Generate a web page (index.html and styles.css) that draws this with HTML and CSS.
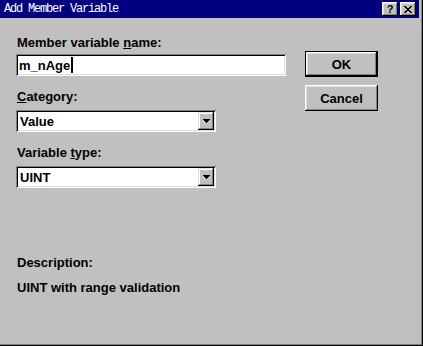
FILE: index.html
```html
<!DOCTYPE html>
<html lang="en">
<head>
  <meta charset="UTF-8">
  <title>Add Member Variable</title>
  <link rel="stylesheet" href="styles.css">
</head>
<body>
  <div class="window">
    <!-- Caption -->
    <div class="titlebar">
      <span class="title">Add Member Variable</span>
      <div class="caption-buttons">
        <div class="cap-btn help">?</div>
        <div class="cap-btn">
          <svg width="8" height="7" viewBox="0 0 8 7" shape-rendering="crispEdges"><path d="M0 0h2v1h-2zM6 0h2v1h-2zM1 1h2v1h-2zM5 1h2v1h-2zM2 2h4v1h-4zM3 3h2v1h-2zM2 4h4v1h-4zM1 5h2v1h-2zM5 5h2v1h-2zM0 6h2v1h-2zM6 6h2v1h-2z" fill="#000"/></svg>
        </div>
      </div>
    </div>

    <!-- Dialog body -->
    <div class="dialog">
      <div class="fields">
        <div class="label">Member variable <u>n</u>ame:</div>
        <div class="textbox">m_nAge<span class="caret"></span></div>

        <div class="label gap"><u>C</u>ategory:</div>
        <div class="combo">
          <span class="combo-value">Value</span>
          <span class="combo-arrow"><svg width="7" height="4" viewBox="0 0 7 4" shape-rendering="crispEdges"><path d="M0 0h7v1h-7zM1 1h5v1h-5zM2 2h3v1h-3zM3 3h1v1h-1z" fill="#000"/></svg></span>
        </div>

        <div class="label gap">Variable <u>t</u>ype:</div>
        <div class="combo">
          <span class="combo-value">UINT</span>
          <span class="combo-arrow"><svg width="7" height="4" viewBox="0 0 7 4" shape-rendering="crispEdges"><path d="M0 0h7v1h-7zM1 1h5v1h-5zM2 2h3v1h-3zM3 3h1v1h-1z" fill="#000"/></svg></span>
        </div>

        <div class="description">
          <div class="label">Description:</div>
          <div class="label desc-text">UINT with range validation</div>
        </div>
      </div>

      <div class="buttons">
        <div class="btn default">OK</div>
        <div class="btn">Cancel</div>
      </div>
    </div>
  </div>
</body>
</html>
```

FILE: styles.css
```css
* {
  margin: 0;
  padding: 0;
  box-sizing: border-box;
}

body {
  background-color: #c0c0c0;
  width: 423px;
  height: 346px;
  overflow: hidden;
}

.window {
  width: 423px;
  height: 346px;
  background-color: #c0c0c0;
  box-shadow: inset -1px -1px #000000, inset -2px -2px #808080;
  display: flex;
  flex-direction: column;
}

.titlebar {
  height: 18px;
  margin-right: 4px;
  padding: 0 3px 0 4px;
  background-color: #000080;
  display: flex;
  align-items: center;
  justify-content: space-between;
}

.title {
  font-family: "Liberation Mono", monospace;
  font-size: 12px;
  letter-spacing: -1.2px;
  color: #ffffff;
}

.caption-buttons {
  display: flex;
  gap: 2px;
}

.cap-btn {
  width: 16px;
  height: 14px;
  background-color: #c0c0c0;
  box-shadow: inset -1px -1px #000000, inset 1px 1px #ffffff, inset -2px -2px #808080, inset 2px 2px #dfdfdf;
  display: flex;
  align-items: center;
  justify-content: center;
}

.help {
  font-family: "Liberation Sans", sans-serif;
  font-weight: bold;
  font-size: 11px;
  line-height: 14px;
  color: #000000;
}

.dialog {
  flex-grow: 1;
  display: flex;
  padding: 17px 0 0 16px;
}

.fields {
  width: 270px;
  display: flex;
  flex-direction: column;
}

.label {
  font-family: "Liberation Sans", sans-serif;
  font-weight: bold;
  font-size: 13px;
  line-height: 15px;
  color: #000000;
  padding-left: 1px;
  margin-bottom: 4px;
}

.label.gap {
  margin-top: 13px;
  margin-bottom: 6px;
}

.textbox,
.combo {
  height: 22px;
  background-color: #ffffff;
  box-shadow: inset 1px 1px #808080, inset -1px -1px #ffffff, inset 2px 2px #000000, inset -2px -2px #dfdfdf;
  display: flex;
  align-items: center;
  font-family: "Liberation Sans", sans-serif;
  font-weight: bold;
  font-size: 13px;
  color: #000000;
}

.textbox {
  padding-left: 3px;
}

.caret {
  width: 2px;
  height: 16px;
  margin-left: 1px;
  background-color: #000000;
}

.combo {
  width: 200px;
  padding: 2px;
}

.combo-value {
  flex-grow: 1;
  padding-left: 2px;
}

.combo-arrow {
  width: 16px;
  height: 18px;
  background-color: #c0c0c0;
  box-shadow: inset -1px -1px #000000, inset 1px 1px #dfdfdf, inset -2px -2px #808080, inset 2px 2px #ffffff;
  display: flex;
  align-items: center;
  justify-content: center;
}

.description {
  margin-top: 67px;
}

.desc-text {
  margin-top: 10px;
}

.buttons {
  margin-left: 19px;
  padding-top: 16px;
  display: flex;
  flex-direction: column;
  gap: 8px;
}

.btn {
  width: 73px;
  height: 26px;
  background-color: #c0c0c0;
  box-shadow: inset -1px -1px #000000, inset 1px 1px #ffffff, inset -2px -2px #808080, inset 2px 2px #dfdfdf;
  display: flex;
  align-items: center;
  justify-content: center;
  font-family: "Liberation Sans", sans-serif;
  font-weight: bold;
  font-size: 13px;
  color: #000000;
}

.btn.default {
  border: 1px solid #000000;
}
```
